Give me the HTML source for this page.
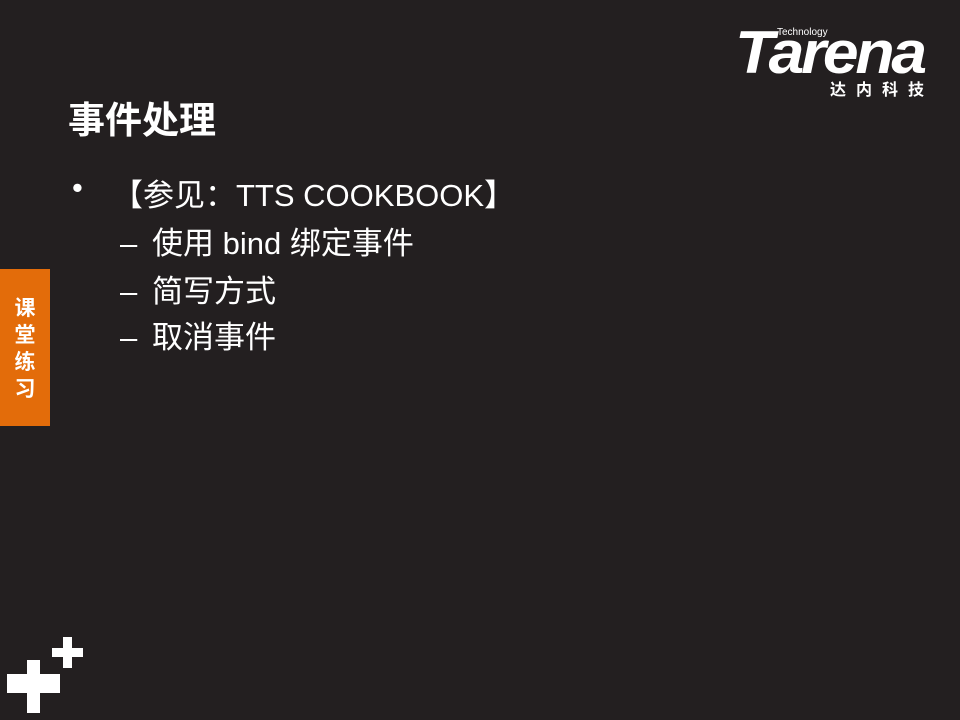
<!DOCTYPE html>
<html><head><meta charset="utf-8"><style>
body{margin:0;width:960px;height:720px;background:#231f20;position:relative;overflow:hidden;font-family:"Liberation Sans","Noto Sans CJK SC",sans-serif;color:#fff}
.a{position:absolute}
.t{font-weight:bold;font-size:37px;left:68px;top:90px}
.l{font-size:31px;white-space:nowrap}
.l span{display:inline-block;width:32px}
.side{left:0;top:269px;width:50px;height:157px;background:#e36c0a}
.side div{position:absolute;left:0;width:50px;text-align:center;font-weight:bold;font-size:21px;line-height:27px;top:26px}
.w{background:#fff}
</style></head><body>
<div class="a" style="left:735px;top:24px;width:200px;height:70px">
<div class="a" style="left:42px;top:3px;font-size:10px">Technology</div>
<div class="a" style="left:0;top:4px;font-size:60px;font-weight:bold;font-style:italic;letter-spacing:-3px;line-height:50px;transform:scaleX(1.07);transform-origin:left">Tarena</div>
<div class="a" style="left:95px;top:52px;font-size:16px;font-weight:bold;letter-spacing:10px">达内科技</div>
</div>
<div class="a t">事件处理</div>
<div class="a l" style="left:72px;top:170px">•</div>
<div class="a l" style="left:112px;top:170px">【参见：TTS COOKBOOK】</div>
<div class="a l" style="left:120px;top:218px"><span>–</span>使用 bind 绑定事件</div>
<div class="a l" style="left:120px;top:266px"><span>–</span>简写方式</div>
<div class="a l" style="left:120px;top:312px"><span>–</span>取消事件</div>
<div class="a side"><div>课<br>堂<br>练<br>习</div></div>
<div class="a w" style="left:7px;top:674px;width:53px;height:19px"></div>
<div class="a w" style="left:27px;top:660px;width:13px;height:53px"></div>
<div class="a w" style="left:52px;top:648px;width:31px;height:9px"></div>
<div class="a w" style="left:63px;top:637px;width:9px;height:31px"></div>
</body></html>
